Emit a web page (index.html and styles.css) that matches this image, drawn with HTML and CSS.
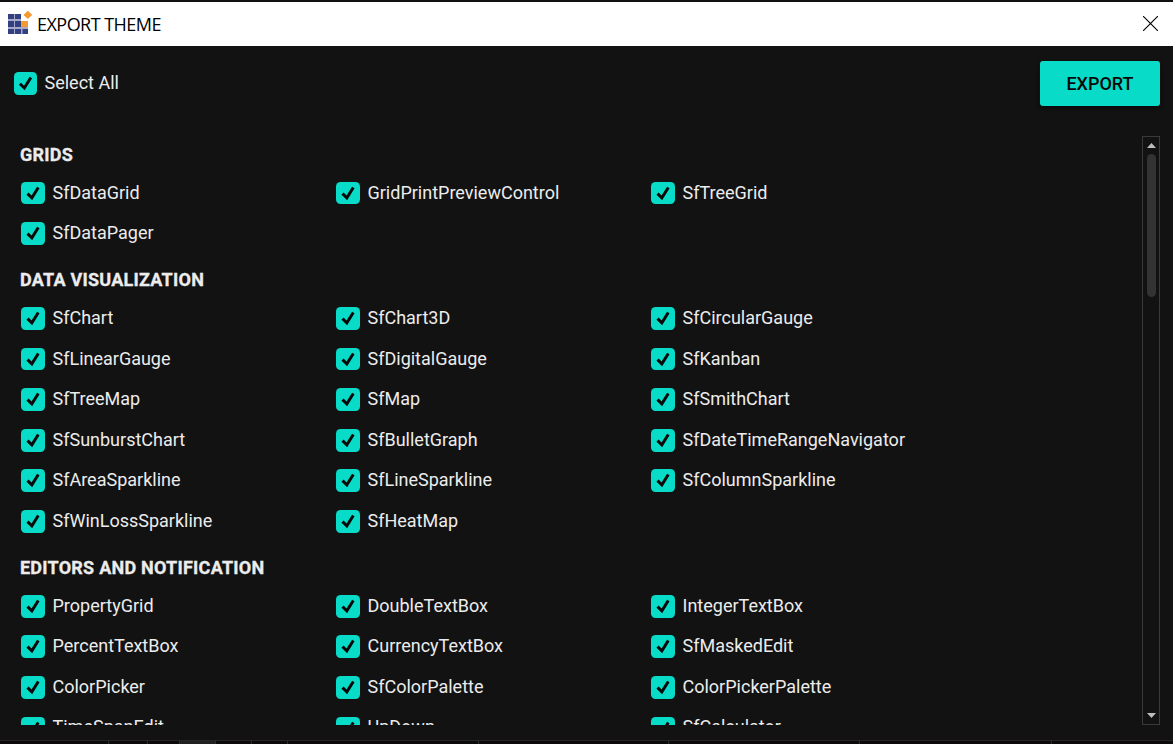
FILE: index.html
```html
<!DOCTYPE html>
<html lang="en">
<head>
<meta charset="utf-8">
<title>Export Theme</title>
<link rel="stylesheet" href="styles.css">
</head>
<body>
<svg width="0" height="0" class="defs"><defs>
<symbol id="tick" viewBox="0 0 24 24"><path d="M6.200 12.200 L10.800 16.700 L17.600 5.800" fill="none" stroke="#080808" stroke-width="3.100"/></symbol>
</defs></svg>
<header class="titlebar">
  <svg class="logo" width="24" height="24" viewBox="0 0 24 24">
    <path fill="#a5aacb" d="M0 3h13v7h7v13H0z"/>
    <path fill="#323f80" d="M0 3h6v5H0zM7 3h6v5H7zM0 10h6v6H0zM7 10h6v6H7zM0 18h6v5H0zM7 18h6v5H7zM14.500 18H20v5h-5.500z"/>
    <path fill="#f49a35" d="M14 10h6v6h-6zM19.700 -.2L24.300 3.700 19.900 8 15.500 4.100z"/>
  </svg>
  <h1 class="title">EXPORT THEME</h1>
  <svg class="close" width="15" height="15" viewBox="0 0 15 15"><path d="M0 0L15 15M15 0L0 15" stroke="#000" stroke-width="1.1"/></svg>
</header>
<div class="toolbar">
  <div class="item all"><span class="box"><svg><use href="#tick"/></svg></span><span class="label">Select All</span></div>
  <button class="export">EXPORT</button>
</div>
<div class="content">
  <main class="list" id="list"></main>
  <div class="scrollbar">
    <svg class="arrow" width="9" height="5" viewBox="0 0 9 5"><path d="M0 5L4.500 0 9 5z" fill="#bdbdbd"/></svg>
    <div class="thumb"></div>
    <svg class="arrow" width="9" height="5" viewBox="0 0 9 5"><path d="M0 0L4.500 5 9 0z" fill="#bdbdbd"/></svg>
  </div>
</div>
<footer class="strip">
  <i class="seg w1"></i><i class="seg w2"></i><i class="seg w3"></i><i class="seg w4 lit"></i><i class="seg w5"></i><i class="seg w6"></i><i class="seg w7"></i><i class="seg w8"></i><i class="seg w7"></i><i class="seg w9"></i>
</footer>
<script src="app.js"></script>
</body>
</html>
```
FILE: styles.css
```css
* { box-sizing: border-box; }
body {
  margin: 0;
  width: 1173px;
  height: 744px;
  overflow: hidden;
  display: flex;
  flex-direction: column;
  background: #121212;
  border-top: 2px solid #101010;
  color: #ececec;
  font-family: Roboto, sans-serif;
  font-size: 18px;
}
.defs { position: absolute; }
.titlebar {
  flex: none;
  height: 44px;
  background: #fff;
  color: #000;
  display: flex;
  align-items: center;
  padding: 0 15px 0 8px;
}
.logo { overflow: visible; margin-top: -2px; }
.title {
  margin: -1px auto 0 5px;
  font: 400 18px/24px "Open Sans", "Noto Sans", sans-serif;
  letter-spacing: -0.53px;
}
.close { margin-top: -1px; }
.toolbar {
  flex: none;
  height: 82px;
  display: flex;
  justify-content: space-between;
  align-items: flex-start;
  padding: 15px 13px 0 13.500px;
}
.export {
  width: 120px;
  height: 45px;
  padding: 0;
  border: 0;
  border-radius: 3px;
  background: #08dbc8;
  color: #080808;
  font: 500 18px/45px Roboto, sans-serif;
  box-shadow: 0 2px 4px #0008;
}
.item {
  height: 40.6px;
  display: flex;
  align-items: center;
}
.all { height: 45px; }
.box {
  width: 24px;
  height: 22.800px;
  border-radius: 4.500px;
  background: #08dbc8;
  display: flex;
}
.all .box { width: 23px; height: 23px; }
.box svg { width: 100%; height: 100%; }
.label { margin-left: 8px; padding-bottom: 1px; line-height: 24px; }
.content {
  flex: none;
  height: 597px;
  display: flex;
  justify-content: space-between;
  padding-right: 13px;
}
.list {
  width: 1100px;
  overflow: hidden;
  padding: 0.6px 0 0 20.500px;
}
.heading {
  height: 44.2px;
  margin: 0 0 0 -0.500px;
  padding-top: 14px;
  font-size: 18px;
  line-height: 24px;
  font-weight: 700;
  letter-spacing: 0.24px;
  -webkit-text-stroke: 0.3px;
}
.grid { display: grid; grid-template-columns: repeat(3, 315px); }
.scrollbar {
  width: 18px;
  margin-top: 8px;
  border: 1px solid #3a3a3a;
  display: flex;
  flex-direction: column;
  align-items: center;
  padding: 6px 0 6px;
}
.thumb {
  width: 9px;
  height: 143px;
  margin: 6px 0 auto;
  border-radius: 5px;
  background: #333;
}
.arrow { flex: none; }
.strip {
  flex: none;
  height: 4px;
  margin-top: 15px;
  display: flex;
  border-top: 1px solid #262626;
  background: #0d0a0b;
}
.seg { flex: none; border-right: 1px solid #2d2d2d; }
.w1 { width: 109px; }
.w2 { width: 39px; }
.w3 { width: 32px; }
.w4 { width: 36px; }
.w5 { width: 36px; }
.w6 { width: 36px; }
.w7 { width: 191px; }
.w8 { width: 190px; }
.w9 { width: 192px; }
.lit { background: #202020; }
```
FILE: app.js
```
const sections = [
  ["GRIDS", ["SfDataGrid", "GridPrintPreviewControl", "SfTreeGrid", "SfDataPager"]],
  ["DATA VISUALIZATION", ["SfChart", "SfChart3D", "SfCircularGauge", "SfLinearGauge", "SfDigitalGauge", "SfKanban", "SfTreeMap", "SfMap", "SfSmithChart", "SfSunburstChart", "SfBulletGraph", "SfDateTimeRangeNavigator", "SfAreaSparkline", "SfLineSparkline", "SfColumnSparkline", "SfWinLossSparkline", "SfHeatMap"]],
  ["EDITORS AND NOTIFICATION", ["PropertyGrid", "DoubleTextBox", "IntegerTextBox", "PercentTextBox", "CurrencyTextBox", "SfMaskedEdit", "ColorPicker", "SfColorPalette", "ColorPickerPalette", "TimeSpanEdit", "UpDown", "SfCalculator"]]
];
const item = name => `<div class="item"><span class="box"><svg><use href="#tick"/></svg></span><span class="label">${name}</span></div>`;
document.getElementById("list").innerHTML = sections
  .map(([title, names]) => `<section><h2 class="heading">${title}</h2><div class="grid">${names.map(item).join("")}</div></section>`)
  .join("");
```
